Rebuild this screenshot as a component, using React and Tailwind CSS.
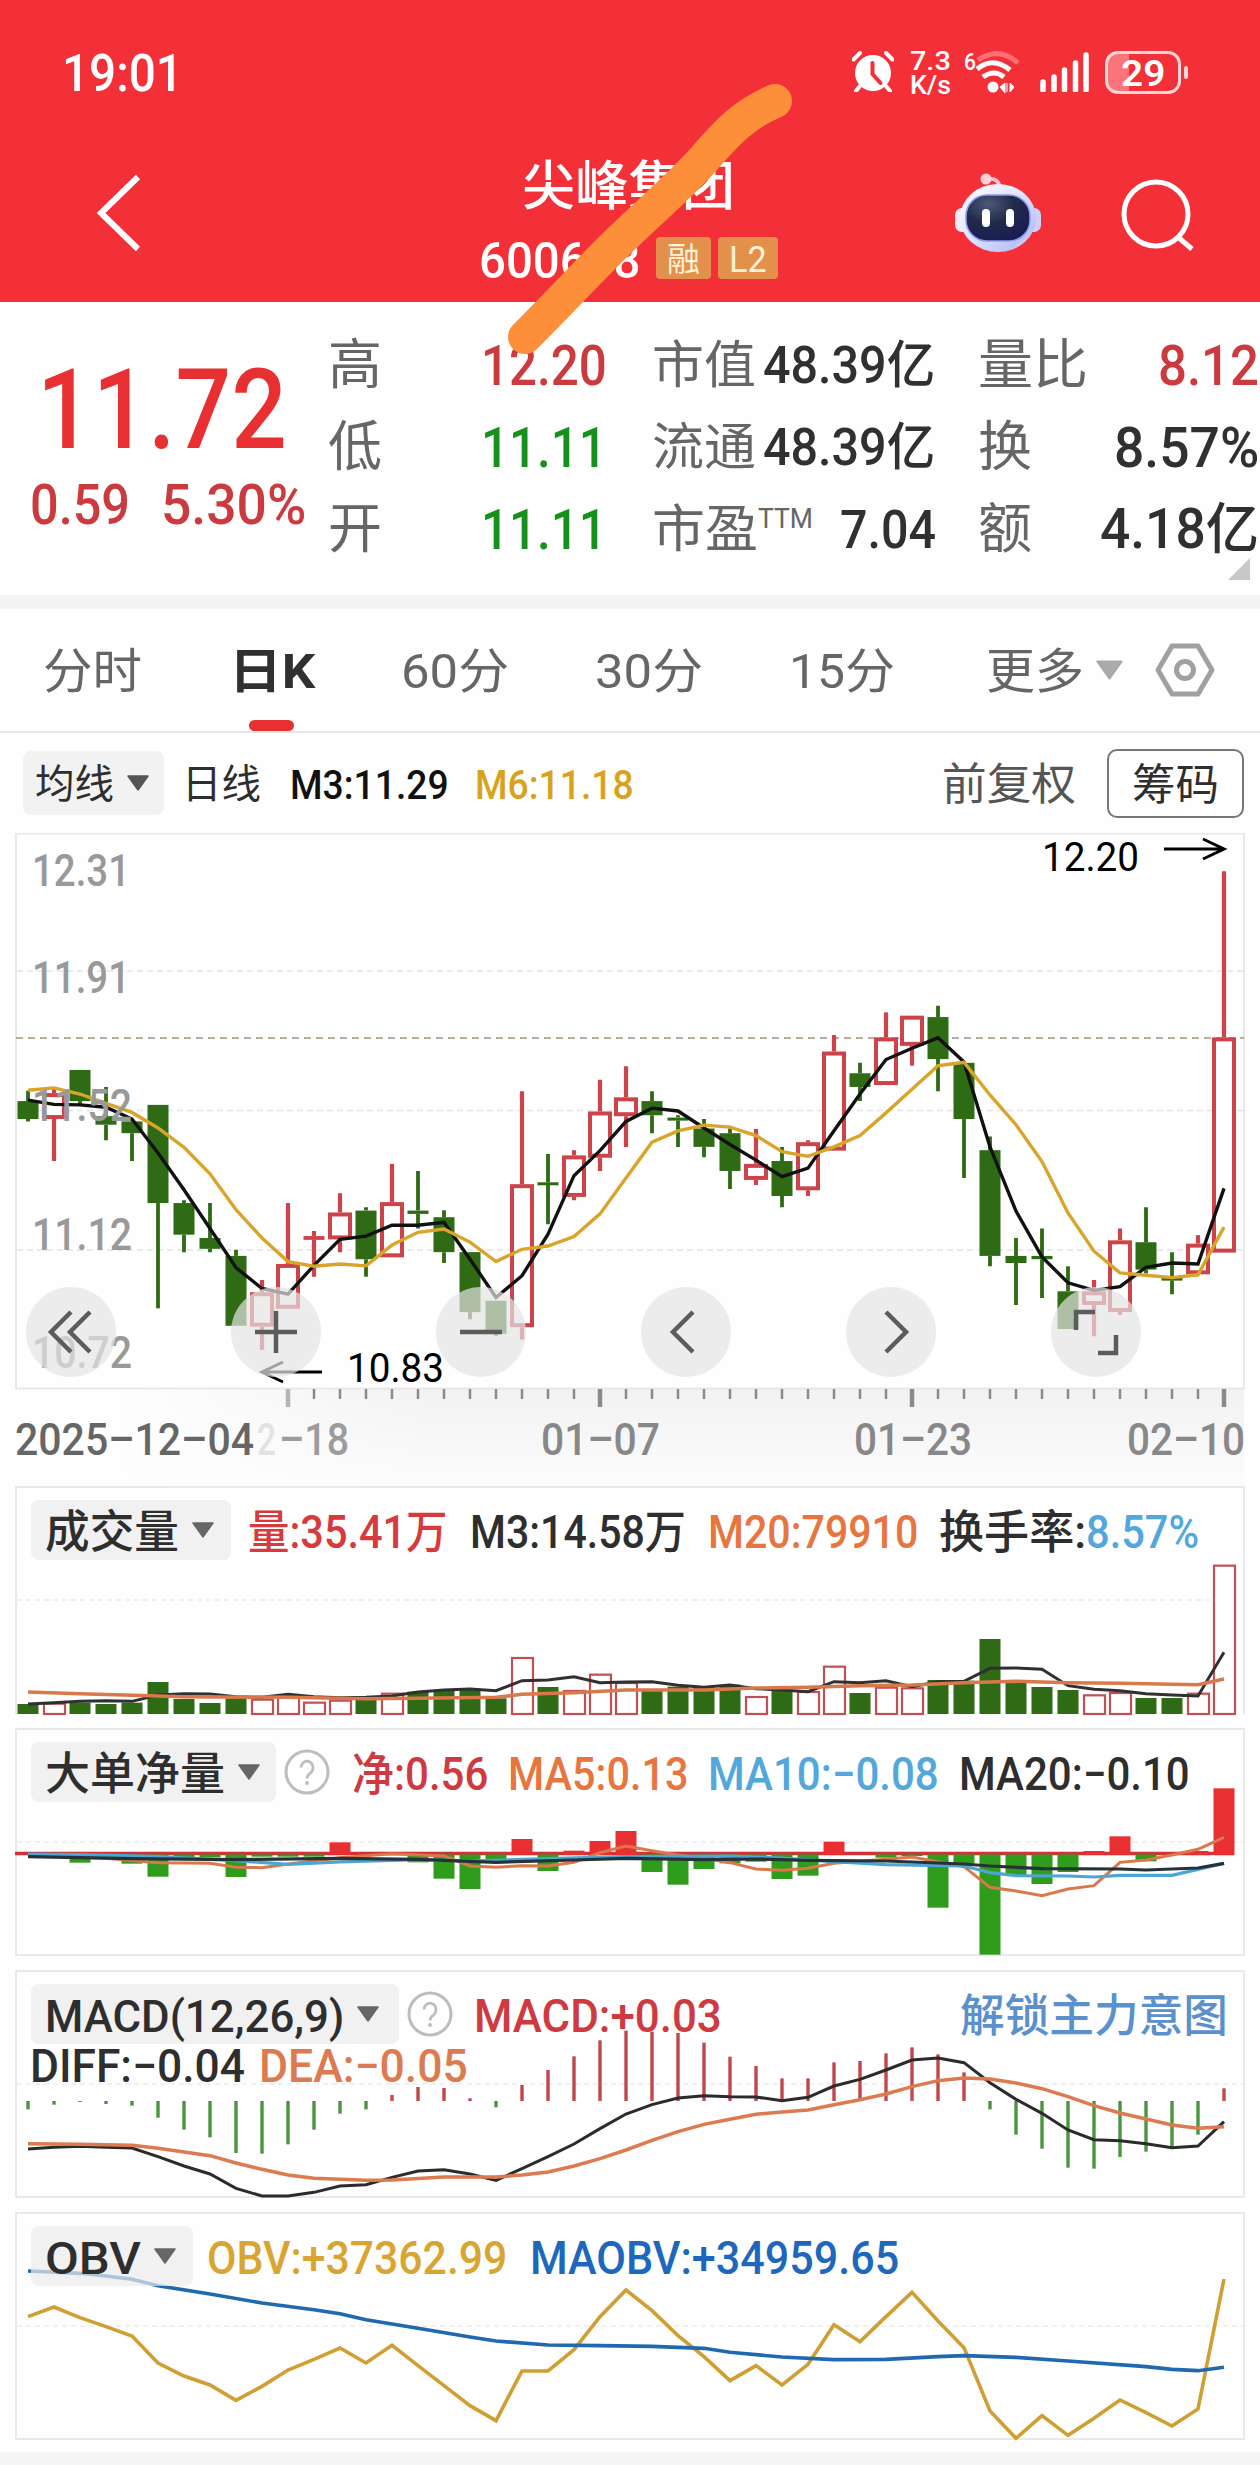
import { useLayoutEffect, useRef, useState } from "react"

const N = 47
const px = (i) => 28 + i * 26

const candles = [
  [0, 743, 765, 803, 808], [1, 738, 748, 803, 892], [0, 699, 699, 765, 775], [0, 735, 797, 815, 848],
  [0, 805, 808, 833, 892], [0, 773, 773, 981, 1204], [0, 975, 981, 1048, 1085], [0, 981, 1055, 1078, 1085],
  [0, 1080, 1093, 1241, 1241], [1, 1144, 1170, 1243, 1292], [1, 981, 1110, 1205, 1205], [1, 1040, 1051, 1059, 1137],
  [1, 960, 1001, 1058, 1085], [0, 990, 997, 1100, 1137], [1, 898, 979, 1096, 1096], [0, 913, 997, 1004, 1035],
  [0, 996, 1011, 1085, 1108], [0, 1085, 1085, 1212, 1227], [0, 1188, 1188, 1258, 1262], [1, 744, 941, 1244, 1270],
  [0, 877, 937, 943, 1026], [1, 869, 880, 968, 975], [1, 720, 787, 885, 913], [1, 691, 757, 797, 862],
  [0, 744, 765, 795, 833], [0, 795, 800, 806, 862], [0, 803, 823, 862, 884], [0, 823, 833, 913, 951],
  [1, 824, 898, 932, 943], [0, 862, 892, 966, 990], [1, 848, 852, 954, 966], [1, 625, 660, 870, 870],
  [0, 684, 706, 735, 765], [1, 577, 630, 731, 731], [1, 584, 584, 648, 690], [0, 563, 587, 676, 744],
  [0, 684, 684, 803, 928], [0, 840, 869, 1093, 1115], [0, 1055, 1093, 1108, 1197], [0, 1035, 1093, 1100, 1182],
  [0, 1115, 1168, 1248, 1248], [1, 1144, 1168, 1197, 1263], [1, 1035, 1060, 1212, 1218], [0, 990, 1064, 1122, 1130],
  [0, 1085, 1139, 1145, 1174], [1, 1049, 1067, 1132, 1132], [1, 278, 630, 1086, 1086],
]

const m3 = [763, 772, 773, 778, 803, 875, 953, 1035, 1118, 1162, 1174, 1113, 1058, 1051, 1028, 1028, 1022, 1100, 1181, 1135, 1047, 923, 870, 808, 780, 786, 822, 857, 890, 925, 907, 828, 750, 677, 653, 631, 682, 862, 998, 1095, 1150, 1166, 1158, 1117, 1108, 1110, 950]
const m6 = [742, 737, 750, 770, 789, 822, 863, 919, 995, 1055, 1105, 1115, 1110, 1114, 1070, 1043, 1036, 1064, 1105, 1079, 1072, 1052, 1004, 928, 852, 828, 816, 820, 838, 872, 882, 862, 838, 790, 740, 690, 683, 752, 815, 893, 1002, 1083, 1129, 1134, 1139, 1133, 1032]

const volume = [672, 668, 668, 672, 668, 606, 657, 669, 655, 656, 648, 665, 659, 655, 638, 635, 630, 628, 655, 531, 621, 630, 581, 606, 633, 620, 622, 614, 648, 630, 633, 557, 639, 620, 622, 600, 602, 477, 606, 621, 630, 643, 636, 654, 654, 638, 254]
const volUp = [1, 9, 10, 11, 12, 14, 19, 21, 22, 23, 28, 30, 31, 33, 34, 41, 42, 45, 46]
const volM3 = [672, 668, 664, 662, 664, 645, 641, 642, 650, 652, 643, 650, 653, 652, 648, 636, 630, 627, 632, 602, 600, 590, 608, 606, 605, 616, 622, 615, 626, 630, 635, 605, 608, 602, 620, 605, 604, 565, 564, 568, 617, 628, 632, 641, 645, 648, 517]
const volM20 = [[0, 636], [2, 641], [4, 646], [6, 650], [10, 652], [13, 656], [15, 655], [18, 652], [19, 643], [21, 638], [23, 630], [26, 630], [28, 624], [30, 622], [32, 617], [34, 615], [36, 608], [38, 604], [40, 608], [42, 610], [44, 613], [45, 614], [46, 597]]

const net = [[2, 1148], [3, 1130], [4, 1151], [5, 1190], [6, 1132], [7, 1132], [8, 1191], [9, 1130], [10, 1130], [11, 1130], [12, 1087], [15, 1147], [16, 1196], [17, 1227], [18, 1140], [19, 1077], [20, 1173], [21, 1112], [22, 1083], [23, 1053], [24, 1176], [25, 1214], [26, 1167], [27, 1150], [28, 1145], [29, 1197], [30, 1187], [31, 1085], [33, 1133], [34, 1128], [35, 1283], [36, 1150], [37, 1424], [38, 1188], [39, 1212], [40, 1176], [41, 1113], [42, 1069], [43, 1144], [45, 1113], [46, 925]]
const netM5 = [[0, 1124], [3, 1135], [5, 1148], [7, 1150], [8, 1162], [9, 1163], [10, 1152], [12, 1133], [14, 1121], [16, 1128], [17, 1158], [18, 1162], [19, 1157], [20, 1158], [21, 1147], [22, 1118], [23, 1098], [24, 1112], [25, 1125], [26, 1135], [27, 1148], [28, 1167], [29, 1171], [30, 1165], [31, 1150], [33, 1138], [34, 1131], [35, 1145], [36, 1160], [37, 1222], [38, 1233], [39, 1247], [40, 1227], [41, 1217], [42, 1147], [43, 1140], [44, 1125], [45, 1108], [46, 1072]]
const netM10 = [[0, 1122], [2, 1124], [5, 1130], [8, 1142], [10, 1153], [12, 1146], [15, 1139], [17, 1143], [20, 1136], [23, 1130], [27, 1128], [29, 1134], [31, 1145], [33, 1154], [36, 1158], [37, 1178], [38, 1187], [40, 1188], [41, 1191], [42, 1186], [44, 1186], [46, 1150]]
const netM20 = [[0, 1130], [4, 1136], [8, 1139], [12, 1135], [15, 1138], [18, 1147], [21, 1140], [23, 1135], [26, 1139], [28, 1137], [30, 1141], [33, 1143], [36, 1152], [37, 1158], [39, 1166], [42, 1167], [43, 1170], [45, 1164], [46, 1150]]

const macd = [448, 434, 426, 432, 437, 473, 509, 532, 579, 581, 553, 509, 461, 448, 405, 381, 384, 415, 442, 375, 330, 289, 241, 212, 215, 219, 248, 290, 318, 355, 355, 307, 303, 280, 262, 283, 337, 448, 524, 566, 623, 626, 591, 575, 565, 524, 385]
const diff = [567, 562, 559, 562, 564, 590, 618, 642, 685, 708, 708, 697, 678, 674, 652, 633, 629, 642, 661, 626, 590, 552, 506, 462, 434, 414, 407, 410, 411, 422, 412, 378, 358, 330, 300, 294, 308, 368, 418, 460, 510, 539, 542, 551, 563, 558, 485]
const dea = [[0, 551], [2, 553], [4, 556], [5, 565], [7, 587], [8, 609], [9, 628], [10, 645], [11, 655], [13, 661], [14, 660], [16, 651], [18, 651], [19, 645], [20, 636], [21, 618], [22, 596], [23, 570], [24, 541], [25, 515], [26, 493], [27, 478], [28, 463], [29, 456], [30, 450], [31, 434], [32, 419], [33, 402], [34, 380], [35, 362], [36, 354], [37, 357], [38, 369], [39, 386], [40, 410], [41, 437], [42, 459], [43, 477], [44, 495], [45, 505], [46, 500]]

const obv = [1070, 1041, 1073, 1100, 1128, 1209, 1248, 1275, 1321, 1279, 1230, 1198, 1164, 1209, 1156, 1217, 1277, 1337, 1382, 1233, 1233, 1169, 1070, 990, 1052, 1127, 1190, 1262, 1217, 1275, 1213, 1094, 1145, 1070, 997, 1083, 1163, 1353, 1435, 1367, 1426, 1375, 1320, 1358, 1398, 1347, 957]
const maobv = [[0, 933], [2, 940], [3, 948], [4, 958], [5, 977], [7, 1002], [9, 1029], [11, 1049], [12, 1061], [13, 1079], [15, 1105], [17, 1131], [18, 1143], [20, 1155], [22, 1157], [24, 1159], [26, 1165], [27, 1177], [29, 1191], [31, 1199], [33, 1198], [35, 1190], [36, 1187], [38, 1192], [40, 1203], [43, 1220], [44, 1228], [45, 1232], [46, 1222]]

const yPrice = (v) => 833 + (v - 197) * 0.472
const yMid = (v) => 1480 + v / 3
const yLow = (v) => 1960 + v / 3

// squeezes or stretches a line of text to a fixed width
const Fit = ({ w, className = "", children }) => {
  const ref = useRef(null)
  const [scale, setScale] = useState(1)

  useLayoutEffect(() => {
    setScale(w / ref.current.offsetWidth)
  }, [w])

  return (
    <span className={`block shrink-0 leading-none pt-[0.1em] ${className}`} style={{ width: w }}>
      <span
        ref={ref}
        className="inline-block origin-left whitespace-nowrap leading-none align-top"
        style={{ transform: `scaleX(${scale})` }}
      >
        {children}
      </span>
    </span>
  )
}

const Line = ({ data, y, color, width = 3.4 }) => (
  <polyline
    points={data.map((d, i) => (Array.isArray(d) ? `${px(d[0])},${y(d[1])}` : `${px(i)},${y(d)}`)).join(" ")}
    fill="none"
    stroke={color}
    strokeWidth={width}
  />
)

const Caret = ({ className }) => (
  <svg viewBox="0 0 22 16" className={`shrink-0 ${className}`}>
    <path d="M1 1h20L11 15z" fill="currentColor" stroke="currentColor" strokeWidth="1.5" strokeLinejoin="round" />
  </svg>
)

const Help = () => (
  <svg viewBox="0 0 46 46" className="w-[46px] h-[46px] ml-2 shrink-0">
    <circle cx="23" cy="23" r="21" fill="none" stroke="#bdbdbd" strokeWidth="3" />
    <path d="M17 18.5a6 6.5 0 1 1 9.5 5.5c-2.5 1.8-3.5 3-3.5 5.5" fill="none" stroke="#bdbdbd" strokeWidth="2.6" />
    <circle cx="23" cy="34" r="2" fill="#bdbdbd" />
  </svg>
)

const Pill = ({ label, w, className }) => (
  <div className={`h-[60px] rounded-lg bg-[#ebebeb]/70 flex items-center pl-[14px] shrink-0 ${className}`}>
    <Fit w={w} className="text-[45px] text-[#2e2e2e]">{label}</Fit>
    <Caret className="w-[22px] h-4 ml-[13px] text-[#666]" />
  </div>
)

const StatusBar = () => (
  <div className="h-[144px] pt-[50px] pl-[62px] flex items-start">
    <Fit w={121} className="-mt-[7px] text-[52px] font-medium">19:01</Fit>
    <svg viewBox="0 0 42 42" className="w-[42px] h-[42px] ml-[669px]">
      <circle cx="21" cy="23" r="18" fill="#fff" />
      <path d="M1.5 9.5L8 3M40.5 9.5L34 3M8 36l-4 5M34 36l4 5" stroke="#fff" strokeWidth="4" strokeLinecap="round" />
      <path d="M20.5 13v11l8 9" fill="none" stroke="#f32f38" strokeWidth="4" strokeLinecap="round" />
    </svg>
    <div className="ml-[16px] -mt-[5px] w-[43px] text-[26px] font-medium">
      <Fit w={41} className="h-[24px]">7.3</Fit>
      <Fit w={41}>K/s</Fit>
    </div>
    <svg viewBox="-2 0 60 44" className="w-[60px] h-[44px] ml-[9px]">
      <text x="0" y="20" fontSize="24" textLength="12" lengthAdjust="spacingAndGlyphs" fill="#fff" fontWeight="500">6</text>
      <path d="M14 10q21-14 40 3" fill="none" stroke="#ff7075" strokeWidth="5" />
      <path d="M13 19q16-13 33 1M19 27q11-8 21 0" fill="none" stroke="#fff" strokeWidth="5" />
      <circle cx="29" cy="37" r="5.5" fill="#fff" />
      <path d="M36 37l5-4v10zM43 33v9M46 33v9l4-5z" fill="#fff" stroke="#fff" strokeWidth="1" />
    </svg>
    <svg viewBox="0 0 50 42" className="w-[50px] h-[42px] ml-[18px]">
      <path d="M3 32v8M14 27v13M24.5 20v20M35.5 13v27M46 5v35" stroke="#fff" strokeWidth="5.5" strokeLinecap="round" />
    </svg>
    <div className="ml-[15px] mt-[1px] w-[76px] h-[43px] rounded-[13px] border-[3px] border-[#ffd5d6] flex items-center overflow-hidden bg-linear-to-r from-[#fa757b] from-30% to-transparent to-30%">
      <Fit w={44} className="ml-[13px] -mt-[2px] text-[37px] font-semibold">29</Fit>
    </div>
    <div className="mt-[16px] ml-[3px] w-[4px] h-[13px] rounded bg-[#ffd5d6]" />
  </div>
)

const Robot = () => (
  <svg viewBox="0 0 88 82" className="w-[88px] h-[82px] ml-[175px] mt-[28px]">
    <defs>
      <linearGradient id="shell" x1="0" y1="0" x2="1" y2="1">
        <stop offset="0" stopColor="#fff" />
        <stop offset="0.5" stopColor="#dfe2ff" />
        <stop offset="0.8" stopColor="#bcc3f8" />
        <stop offset="1" stopColor="#f6e9fa" />
      </linearGradient>
      <radialGradient id="face" cx="0.35" cy="0.2" r="0.8">
        <stop offset="0" stopColor="#4d5878" />
        <stop offset="0.5" stopColor="#222b4c" />
        <stop offset="1" stopColor="#1a1d52" />
      </radialGradient>
    </defs>
    <path d="M33 7q12-2 13 10" fill="none" stroke="#ffbfc6" strokeWidth="4" />
    <circle cx="32" cy="7" r="5.5" fill="#ffd3d8" />
    <rect x="1" y="36" width="16" height="24" rx="7" fill="#f3eaf8" />
    <rect x="71" y="36" width="16" height="24" rx="7" fill="#ccd0fa" />
    <ellipse cx="44" cy="46" rx="38" ry="34" fill="url(#shell)" />
    <rect x="12" y="23" width="64" height="46" rx="21" fill="url(#face)" stroke="#8c9cf0" strokeWidth="1.5" />
    <rect x="28" y="37" width="8" height="18" rx="4" fill="#fff" />
    <rect x="52" y="37" width="8" height="18" rx="4" fill="#fff" />
  </svg>
)

const NavBar = () => (
  <div className="h-[158px] pl-[94px] flex items-start">
    <svg viewBox="0 0 50 80" className="w-[50px] h-[80px] mt-[29px]">
      <path d="M44 4L7 40l37 36" fill="none" stroke="#fff" strokeWidth="6" />
    </svg>
    <div className="ml-[335px] w-[300px] pt-[12px]">
      <Fit w={213} className="ml-[43px] text-[53px] font-medium">尖峰集团</Fit>
      <div className="flex items-center mt-[17px] h-[54px]">
        <Fit w={162} className="text-[50px] font-medium">600668</Fit>
        <div className="ml-[15px] w-[55px] h-[42px] rounded bg-[#e2904b] text-[#fff3d6] flex justify-center items-center">
          <Fit w={33} className="text-[33px]">融</Fit>
        </div>
        <div className="ml-[7px] w-[60px] h-[42px] rounded bg-[#e2904b] text-[#fff3d6] flex justify-center items-center">
          <Fit w={38} className="text-[36px]">L2</Fit>
        </div>
      </div>
    </div>
    <Robot />
    <svg viewBox="0 0 76 76" className="w-[76px] h-[76px] ml-[79px] mt-[34px]">
      <circle cx="35" cy="36" r="32" fill="none" stroke="#fff" strokeWidth="5" />
      <path d="M58 60l13 11" stroke="#fff" strokeWidth="5" />
    </svg>
  </div>
)

const Quote = () => (
  <div className="h-[293px] flex relative">
    <div className="w-[328px] pt-[41px] text-[#cb3a3f]">
      <Fit w={250} className="ml-[37px] text-[112px] font-medium text-[#e83032]">11.72</Fit>
      <div className="flex mt-[5px] text-[56px] font-medium">
        <Fit w={100} className="ml-[30px]">0.59</Fit>
        <Fit w={145} className="ml-[31px]">5.30%</Fit>
      </div>
    </div>
    <div className="w-[324px] pt-[20px] text-[#666] text-[54px]">
      {[["高", "12.20", "text-[#cb3a3f]"], ["低", "11.11", "text-[#15911c]"], ["开", "11.11", "text-[#15911c]"]].map(([k, v, c]) => (
        <div key={k} className="flex items-center h-[82px]">
          <Fit w={54} className="mr-[99px]">{k}</Fit>
          <Fit w={126} className={`text-[56px] font-medium ${c}`}>{v}</Fit>
        </div>
      ))}
    </div>
    <div className="w-[326px] pt-[20px] text-[#666] text-[51px]">
      {["市值", "流通"].map((k) => (
        <div key={k} className="flex items-center h-[82px]">
          <Fit w={104}>{k}</Fit>
          <Fit w={172} className="ml-[7px] font-medium text-[#303030]">48.39亿</Fit>
        </div>
      ))}
      <div className="flex items-center h-[82px]">
        <Fit w={106}>市盈</Fit>
        <Fit w={55} className="text-[27px] mb-[18px]">TTM</Fit>
        <Fit w={96} className="ml-[27px] text-[54px] font-medium text-[#303030]">7.04</Fit>
      </div>
    </div>
    <div className="w-[281px] pt-[20px] text-[#666] text-[54px]">
      <div className="flex items-center justify-between h-[82px]">
        <Fit w={110}>量比</Fit>
        <Fit w={101} className="text-[56px] font-medium text-[#cb3a3f]">8.12</Fit>
      </div>
      <div className="flex items-center justify-between h-[82px]">
        <Fit w={54}>换</Fit>
        <Fit w={145} className="text-[56px] font-medium text-[#303030]">8.57%</Fit>
      </div>
      <div className="flex items-center justify-between h-[82px]">
        <Fit w={54}>额</Fit>
        <Fit w={159} className="text-[55px] font-medium text-[#303030]">4.18亿</Fit>
      </div>
    </div>
    <svg viewBox="0 0 22 22" className="absolute right-[10px] bottom-[15px] w-[22px] h-[22px]">
      <path d="M22 0v22H0z" fill="#c8c8c8" />
    </svg>
  </div>
)

const Tabs = () => (
  <div className="border-t-[14px] border-t-[#f4f4f4] border-b-2 border-b-[#e6e6e6] h-[138px] pl-[43px] flex items-center text-[48px] text-[#666] relative">
    <Fit w={99}>分时</Fit>
    <Fit w={87} className="ml-[87px] font-bold text-[#303030]">日K</Fit>
    <Fit w={108} className="ml-[85px]">60分</Fit>
    <Fit w={108} className="ml-[86px]">30分</Fit>
    <Fit w={106} className="ml-[86px]">15分</Fit>
    <Fit w={98} className="ml-[91px]">更多</Fit>
    <Caret className="w-[27px] h-[24px] ml-[12px] text-[#aaa]" />
    <svg viewBox="0 0 60 56" className="w-[60px] h-[56px] ml-[32px]">
      <path d="M17 4h26l14 24-14 24H17L3 28z" fill="none" stroke="#a0a0a0" strokeWidth="5" strokeLinejoin="round" />
      <circle cx="30" cy="28" r="8.5" fill="none" stroke="#a0a0a0" strokeWidth="5" />
    </svg>
    <div className="absolute left-[249px] bottom-0 w-[45px] h-[11px] rounded-full bg-[#e83032]" />
  </div>
)

const AverageRow = () => (
  <div className="h-[100px] pl-[23px] pr-[16px] flex items-center text-[41px] text-[#2e2e2e]">
    <div className="w-[141px] h-[64px] rounded-lg bg-[#f2f2f2] flex items-center pl-[12px]">
      <Fit w={79} className="text-[40px]">均线</Fit>
      <Caret className="w-[22px] h-4 ml-[13px] text-[#555]" />
    </div>
    <Fit w={79} className="ml-[18px] text-[40px]">日线</Fit>
    <Fit w={159} className="ml-[29px] font-medium text-[#111]">M3:11.29</Fit>
    <Fit w={159} className="ml-[26px] font-medium text-[#d9a21b]">M6:11.18</Fit>
    <Fit w={134} className="ml-[308px] text-[44px] text-[#555]">前复权</Fit>
    <div className="ml-auto w-[137px] h-[69px] rounded-[10px] border-2 border-[#777] flex items-center justify-center">
      <Fit w={87} className="text-[43px]">筹码</Fit>
    </div>
  </div>
)

const controls = [
  "M71 1312l-20 20 20 20M90 1312l-20 20 20 20",
  "M255 1332h42M276 1311v42",
  "M460 1332h42",
  "M693 1312l-20 20 20 20",
  "M886 1312l20 20-20 20",
  "M1076 1330v-18h19M1098 1353h18v-18",
]

const AxisText = ({ x, y, w, size = 44, fill = "#999", weight = 500, children }) => (
  <text x={x} y={y} fontSize={size} fill={fill} fontWeight={weight} textLength={w} lengthAdjust="spacingAndGlyphs">{children}</text>
)

const PriceChart = () => (
  <svg viewBox="0 833 1260 653" className="block w-[1260px] h-[653px]">
    <defs>
      <linearGradient id="scrub" x1="0" y1="0" x2="0" y2="1">
        <stop offset="0" stopColor="#f2f2f2" />
        <stop offset="1" stopColor="#fcfcfc" />
      </linearGradient>
      <linearGradient id="fade" x1="0" y1="0" x2="1" y2="0">
        <stop offset="0" stopColor="#fefefe" />
        <stop offset="1" stopColor="#fefefe" stopOpacity="0" />
      </linearGradient>
    </defs>
    <rect x="120" y="1389" width="1124" height="97" fill="url(#scrub)" />
    <rect x="119" y="1389" width="320" height="97" fill="url(#fade)" />
    <rect x="16" y="833.5" width="1228" height="555" fill="none" stroke="#e8e8e8" strokeWidth="2" />
    {[971, 1110.5, 1250].map((y) => (
      <path key={y} d={`M17 ${y}H1243`} stroke="#e4e4e4" strokeWidth="1.5" strokeDasharray="6 4" />
    ))}
    <path d="M16 1038H1244" stroke="#a5917f" strokeWidth="1.6" strokeDasharray="7 5" />

    {candles.map(([up, h, t, b, l], i) => {
      const x = px(i)
      const top = yPrice(t)
      const hgt = yPrice(b) - top
      const color = up ? "#cc4449" : "#2f6a14"
      return (
        <g key={i}>
          <path d={`M${x} ${yPrice(h)}V${top}M${x} ${top + hgt}V${yPrice(l)}`} stroke={color} strokeWidth={up ? 4.2 : 3.8} />
          {up && hgt > 6 ? (
            <rect x={x - 10} y={top + 2} width="20" height={hgt - 4} fill="#fff" stroke={color} strokeWidth="4" />
          ) : (
            <rect x={x - 10.5} y={top} width="21" height={Math.max(hgt, 3)} fill={color} />
          )}
        </g>
      )
    })}
    <Line data={m3} y={yPrice} color="#111" />
    <Line data={m6} y={yPrice} color="#d8a52a" />

    <AxisText x={32} y={886} w={98}>12.31</AxisText>
    <AxisText x={32} y={993} w={98}>11.91</AxisText>
    <AxisText x={32} y={1121} w={100}>11.52</AxisText>
    <AxisText x={32} y={1250} w={100}>11.12</AxisText>
    <AxisText x={32} y={1368} w={100}>10.72</AxisText>
    <AxisText x={1042} y={871} w={97} size={40} weight={400} fill="#000">12.20</AxisText>
    <path d="M1164 849h58M1203 839l21 10-21 10" fill="none" stroke="#000" strokeWidth="3" />
    <AxisText x={347} y={1382} w={97} size={40} weight={400} fill="#000">10.83</AxisText>
    <path d="M322 1372h-58M283 1362l-21 10 21 10" fill="none" stroke="#000" strokeWidth="3" />

    {controls.map((d, i) => (
      <g key={d}>
        <circle cx={71 + i * 205} cy="1332" r="45" fill="#e4e4e4" fillOpacity="0.7" />
        <path d={d} fill="none" stroke="#5c5c5c" strokeWidth="4.5" />
      </g>
    ))}

    {Array.from({ length: N }, (_, i) => i).slice(10).map((i) => {
      const major = (i - 10) % 12 === 0
      return <path key={i} d={`M${px(i)} 1389v${major ? 18 : 10}`} stroke={i === 10 ? "#b5b5b5" : "#8a8a8a"} strokeWidth={major ? 4.5 : 2.5} />
    })}
    <AxisText x={257} y={1455} w={19} fill="#e2e2e2">2</AxisText>
    <AxisText x={279} y={1455} w={70} fill="#9c9c9c">–18</AxisText>
    <AxisText x={15} y={1455} w={239} fill="#666">2025–12–04</AxisText>
    <AxisText x={541} y={1455} w={119} fill="#888">01–07</AxisText>
    <AxisText x={854} y={1455} w={118} fill="#888">01–23</AxisText>
    <AxisText x={1127} y={1455} w={118} fill="#888">02–10</AxisText>
  </svg>
)

const Panel = ({ top, gridY, chart, className, children }) => (
  <section className={`relative mx-[15px] h-[228px] border-2 border-[#e9e9e9] ${className}`}>
    <svg viewBox={`15 ${top} 1230 228`} className="absolute -left-[2px] -top-[2px] w-[1230px] h-[228px] overflow-visible">
      <path d={`M17 ${gridY}H1243`} stroke="#ececec" strokeWidth="1.5" strokeDasharray="5 4" />
      {chart}
    </svg>
    <div className="relative pl-[14px] pt-[12px] font-medium">{children}</div>
  </section>
)

const VolumePanel = () => (
  <Panel
    top={1486}
    gridY={1600}
    className="border-b-0"
    chart={
      <>
        {volume.map((v, i) => {
          const y = yMid(v)
          return volUp.includes(i) ? (
            <rect key={i} x={px(i) - 10} y={y + 1} width="21" height={1713 - y} fill="#fff" stroke="#c05055" strokeWidth="2.2" />
          ) : (
            <rect key={i} x={px(i) - 10.5} y={y} width="21" height={1714 - y} fill="#2f6a14" />
          )
        })}
        <Line data={volM3} y={yMid} color="#303030" width={3} />
        <Line data={volM20} y={yMid} color="#d9784a" width={3.5} />
      </>
    }
  >
    <div className="flex items-center text-[46px] text-[#2e2e2e]">
      <Pill label="成交量" w={134} className="w-[200px]" />
      <Fit w={200} className="ml-[17px] text-[#d63a3d]">量:35.41万</Fit>
      <Fit w={216} className="ml-[22px]">M3:14.58万</Fit>
      <Fit w={210} className="ml-[22px] text-[#e8743e]">M20:79910</Fit>
      <Fit w={147} className="ml-[21px]">换手率:</Fit>
      <Fit w={113} className="text-[#52a7dc]">8.57%</Fit>
    </div>
  </Panel>
)

const NetPanel = () => (
  <Panel
    top={1728}
    gridY={1842}
    className="mt-[14px]"
    chart={
      <>
        <path d="M15 1853.5H1234" stroke="#cf3338" strokeWidth="3.5" />
        {net.map(([i, v]) => {
          const y = yMid(v)
          return v < 1120 ? (
            <rect key={i} x={px(i) - 10.5} y={y} width="21" height={1855 - y} fill="#e83032" />
          ) : (
            <rect key={i} x={px(i) - 10.5} y="1854.5" width="21" height={y - 1854.5} fill="#2f9c1c" />
          )
        })}
        <Line data={netM5} y={yMid} color="#d9784a" width={3} />
        <Line data={netM10} y={yMid} color="#4da5d2" width={3.2} />
        <Line data={netM20} y={yMid} color="#26323a" width={3.2} />
      </>
    }
  >
    <div className="flex items-center text-[46px] text-[#2e2e2e]">
      <Pill label="大单净量" w={180} className="w-[245px]" />
      <Help />
      <Fit w={136} className="ml-[22px] text-[#cf3a40]">净:0.56</Fit>
      <Fit w={181} className="ml-[20px] text-[#e8743e]">MA5:0.13</Fit>
      <Fit w={231} className="ml-[19px] text-[#52a7dc]">MA10:−0.08</Fit>
      <Fit w={231} className="ml-[20px]">MA20:−0.10</Fit>
    </div>
  </Panel>
)

const MacdPanel = () => (
  <Panel
    top={1970}
    gridY={2084}
    className="mt-[14px]"
    chart={
      <>
        {macd.map((v, i) => (
          <path key={i} d={`M${px(i)} 2101V${yLow(v)}`} stroke={v < 423 ? "#c2474c" : "#4b9440"} strokeWidth="3.4" />
        ))}
        <Line data={diff} y={yLow} color="#2b2b2b" width={3} />
        <Line data={dea} y={yLow} color="#dc7a50" width={3.5} />
      </>
    }
  >
    <div className="flex items-center text-[46px] text-[#2e2e2e]">
      <Pill label="MACD(12,26,9)" w={299} className="w-[368px]" />
      <Help />
      <Fit w={248} className="ml-[21px] text-[#cf3a40]">MACD:+0.03</Fit>
      <Fit w={268} className="ml-auto mr-[15px] text-[45px] text-[#5a90cc]">解锁主力意图</Fit>
    </div>
    <div className="flex text-[46px] -mt-[6px]">
      <Fit w={215} className="-ml-[1px] text-[#2e2e2e]">DIFF:−0.04</Fit>
      <Fit w={209} className="ml-[14px] text-[#dc7a50]">DEA:−0.05</Fit>
    </div>
  </Panel>
)

const ObvPanel = () => (
  <Panel
    top={2212}
    gridY={2326}
    className="mt-[14px]"
    chart={
      <>
        <Line data={obv} y={yLow} color="#cf9f33" width={3.6} />
        <Line data={maobv} y={yLow} color="#1f69b0" width={3.6} />
      </>
    }
  >
    <div className="flex items-center text-[46px]">
      <Pill label="OBV" w={96} className="w-[162px]" />
      <Fit w={300} className="ml-[14px] text-[#d9a531]">OBV:+37362.99</Fit>
      <Fit w={369} className="ml-[23px] text-[#1d68bd]">MAOBV:+34959.65</Fit>
    </div>
  </Panel>
)

const App = () => {
  return (
    <main className="relative w-[1260px] h-[2465px] overflow-hidden bg-[#fefefe] font-['Roboto','Noto_Sans_CJK_SC',sans-serif]">
      <header className="bg-[#f32f38] text-white">
        <StatusBar />
        <NavBar />
      </header>
      <Quote />
      <Tabs />
      <AverageRow />
      <PriceChart />
      <VolumePanel />
      <NetPanel />
      <MacdPanel />
      <ObvPanel />
      <div className="mt-3 h-4 bg-[#f5f5f5]" />

      {/* marker stroke across the stock name */}
      <svg viewBox="0 0 320 300" className="absolute left-[490px] top-[70px] w-[320px] h-[300px]">
        <path
          d="M35 267C70 232 92 208 120 180S190 116 213 90S252 45 285 31"
          fill="none"
          stroke="#fd8f3a"
          strokeWidth="34"
          strokeLinecap="round"
        />
      </svg>
    </main>
  )
}

export default App
